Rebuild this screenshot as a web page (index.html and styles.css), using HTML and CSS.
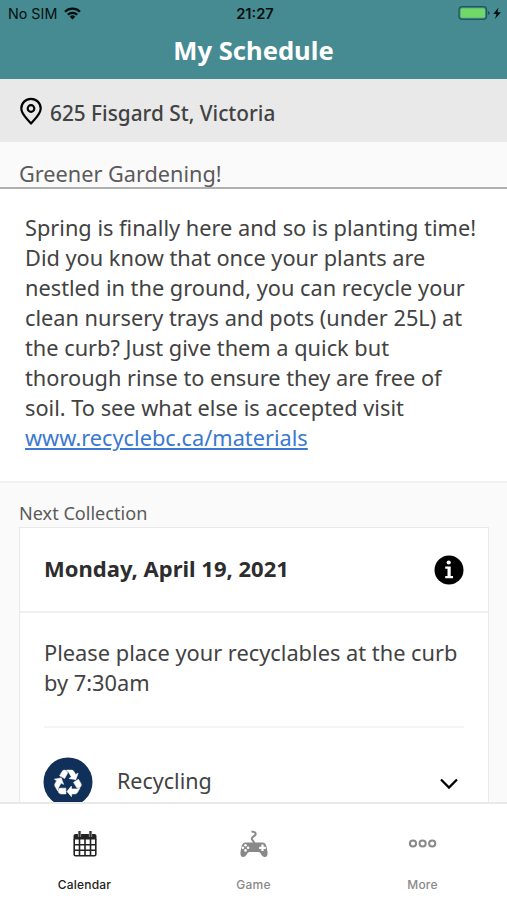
FILE: index.html
```
<!DOCTYPE html>
<html lang="en">
<head>
  <meta charset="UTF-8" />
  <meta name="viewport" content="width=device-width, initial-scale=1" />
  <title>My Schedule</title>
  <link rel="stylesheet" href="styles.css">
</head>
<body>

<header class="header">
  <div class="status-bar">
    <div class="carrier">
      <span>No SIM</span>
      <svg class="wifi" width="17" height="13" viewBox="0 0 17 13">
        <g fill="none" stroke="#050e0f" stroke-width="2.3">
          <path d="M1 4.8a10.5 10.5 0 0 1 15 0" />
          <path d="M3.8 7.8a6.5 6.5 0 0 1 9.4 0" />
        </g>
        <path d="M5.7 9.7a4 4 0 0 1 5.6 0L8.5 12.5z" fill="#050e0f" />
      </svg>
    </div>
    <div class="clock">21:27</div>
    <svg class="battery" width="44" height="16" viewBox="0 0 44 16">
      <rect x="1" y=".7" width="27.5" height="12.6" rx="3" fill="none" stroke="#23565b" stroke-width="1.3" />
      <rect x="2.5" y="2.2" width="24.5" height="9.6" rx="1.5" fill="#6fd869" />
      <path d="M30 5v4q1.8-.5 1.8-2T30 5" fill="#23565b" />
      <path d="M40.5 1.500 35.300 8h3.200l-1.500 5 5.900-6.800h-3.400z" fill="#050e0f" />
    </svg>
  </div>
  <h1 class="title">My Schedule</h1>
</header>

<div class="address">
  <svg class="pin" width="24" height="28" viewBox="0 0 24 28">
    <path d="M12 26.500C8.500 22 2.300 17.500 2.300 11.500a9.700 9.700 0 0 1 19.400 0c0 6-6.200 10.500-9.700 15z" fill="none" stroke="#000" stroke-width="2.200" stroke-linejoin="round" />
    <circle cx="12" cy="11.500" r="3.300" fill="none" stroke="#000" stroke-width="2.200" />
  </svg>
  <span>625 Fisgard St, Victoria</span>
</div>

<main class="content">
  <h2 class="news-title">Greener Gardening!</h2>
  <div class="news">
    Spring is finally here and so is planting time!<br />
    Did you know that once your plants are<br />
    nestled in the ground, you can recycle your<br />
    clean nursery trays and pots (under 25L) at<br />
    the curb? Just give them a quick but<br />
    thorough rinse to ensure they are free of<br />
    soil. To see what else is accepted visit<br />
    <a class="news-link" href="#">www.recyclebc.ca/materials</a>
  </div>

  <h3 class="section-label">Next Collection</h3>
  <div class="card">
    <div class="card-header">
      <span class="date">Monday, April 19, 2021</span>
      <svg class="info" width="30" height="30" viewBox="0 0 30 30">
        <circle cx="15" cy="15" r="14.500" fill="#000" />
        <circle cx="14.700" cy="7.500" r="2.100" fill="#fff" />
        <path d="M11.200 11.500h5.500v9.500h2.300v2.200h-7.800V21h2.300v-7.300h-2.300z" fill="#fff" />
      </svg>
    </div>
    <div class="card-body">
      <p class="note">Please place your recyclables at the curb<br />by 7:30am</p>
      <div class="stream">
        <svg class="recycle" width="50" height="50" viewBox="-25 -25 50 50">
          <circle r="24.500" fill="#10305a" />
          <g fill="#fff" stroke="#fff" stroke-width=".5" stroke-linejoin="round" transform="translate(0 1) scale(1.12)">
            <path id="arm" d="M-7.500-6.500-5.300-10.300Q-4.500-11.500-3-11.500-1.600-11.300-.9-10L-.3-8.900-3-4zM-1.500-11.500H3.200Q4.600-11.500 5.300-10.300L6.800-7.700 9-8.800 7-3 .9-4 3-5.400 .8-9.200z" />
            <use href="#arm" transform="rotate(120)" />
            <use href="#arm" transform="rotate(240)" />
          </g>
        </svg>
        <span class="stream-name">Recycling</span>
        <svg class="chevron" width="20" height="14" viewBox="0 0 20 14">
          <path d="M2 2.500l8 8 8-8" fill="none" stroke="#000" stroke-width="2.300" />
        </svg>
      </div>
    </div>
  </div>
</main>

<nav class="tabs">
  <a class="tab active">
    <svg class="tab-icon" width="30" height="32" viewBox="0 0 30 32">
      <path d="M5.500 6h19q2 0 2 2v3.500h-23V8q0-2 2-2z" fill="#222" />
      <path d="M4.200 11v15.500q0 1.300 1.300 1.300h19q1.300 0 1.300-1.300V11M4 16.800h22M4 22.200h22M9.500 11v17M15 11v17M20.500 11v17" fill="none" stroke="#222" stroke-width="1.600" />
      <path d="M9.500 3v6M20.500 3v6" stroke="#bbb" stroke-width="3.200" />
      <path d="M9.500 3v6M20.500 3v6" stroke="#333" stroke-width="2" />
    </svg>
    <span>Calendar</span>
  </a>
  <a class="tab">
    <svg class="tab-icon" width="30" height="32" viewBox="0 0 30 32">
      <path d="M12.500 3.500q5 .3 4 3.300c-1 2-4 1.700-3.700 4.200.2 1.800 2.500 1.500 2.500 5" fill="none" stroke="#898989" stroke-width="2" />
      <path d="M6.500 14.500h17q3 0 4 4l1 5.500q.5 4.500-2.500 5c-3.500.3-4-5-6.500-5h-9c-2.500 0-3 5.300-6.500 5q-3-.5-2.500-5l1-5.500q1-4 4-4z" fill="#898989" />
      <path d="M23.500 16.500v6.500M20.200 19.800h6.600" stroke="#fff" stroke-width="2.200" />
      <g fill="#fff">
        <circle cx="6.500" cy="17.200" r="1.300" />
        <circle cx="6.500" cy="22.400" r="1.300" />
        <circle cx="3.900" cy="19.800" r="1.300" />
        <circle cx="9.100" cy="19.800" r="1.300" />
      </g>
    </svg>
    <span>Game</span>
  </a>
  <a class="tab">
    <svg class="tab-icon" width="30" height="32" viewBox="0 0 30 32">
      <g fill="none" stroke="#898989" stroke-width="2">
        <circle cx="5" cy="15.500" r="3.100" />
        <circle cx="14.600" cy="15.500" r="3.100" />
        <circle cx="24.200" cy="15.500" r="3.100" />
      </g>
    </svg>
    <span>More</span>
  </a>
</nav>

</body>
</html>
```
FILE: styles.css
```
* {
  box-sizing: border-box;
}

body {
  margin: 0;
  height: 100vh;
  display: flex;
  flex-direction: column;
  overflow: hidden;
  background: #fafafa;
  color: #424242;
  font-family: 'Noto Sans', sans-serif;
}

h1, h2, h3, p {
  margin: 0;
}

.header {
  flex: none;
  height: 79px;
  background: #458b91;
}

.status-bar {
  display: grid;
  grid-template-columns: 1fr auto 1fr;
  align-items: center;
  height: 27px;
  padding: 0 5px 0 8px;
  font-family: Inter, sans-serif;
  font-size: 14.3px;
  color: #050e0f;
}

.carrier {
  display: flex;
  align-items: center;
  gap: 7px;
}

.clock {
  font-size: 14.7px;
  font-weight: 600;
}

.battery {
  justify-self: end;
}

.title {
  font-size: 25.6px;
  line-height: 47px;
  font-weight: 700;
  text-align: center;
  color: #fff;
}

.address {
  flex: none;
  display: flex;
  align-items: center;
  gap: 7px;
  height: 63px;
  padding: 5px 19px 0;
  background: #e9e9e9;
  font-size: 20.8px;
  font-weight: 500;
}

.pin {
  margin-top: -5px;
}

.content {
  flex: 1;
  min-height: 0;
  overflow: hidden;
}

.news-title {
  height: 47px;
  padding: 17px 19px 0;
  border-bottom: 2px solid #b0b0b0;
  font-size: 21.7px;
  line-height: 30px;
  font-weight: 400;
  color: #5b5b5b;
}

.news {
  height: 294px;
  padding: 24px 25px 0;
  background: #fff;
  border-bottom: 2px solid #f1f1f1;
  font-size: 21.75px;
  line-height: 30px;
  white-space: nowrap;
}

.news-link {
  color: #3b78d0;
}

.section-label {
  height: 44px;
  padding: 17px 19px 0;
  font-size: 18.1px;
  line-height: 26px;
  font-weight: 400;
  color: #5b5b5b;
}

.card {
  margin: 0 18px 0 19px;
  height: 320px;
  background: #fff;
  border: 1px solid #e9e9e9;
}

.card-header {
  display: flex;
  align-items: center;
  justify-content: space-between;
  height: 85px;
  padding: 0 24px;
  border-bottom: 2px solid #efefef;
}

.date {
  margin-top: -4px;
  font-size: 22px;
  font-weight: 700;
  color: #2d2d2d;
}

.info {
  margin-top: 1px;
}

.card-body {
  padding: 25px 24px 0;
}

.note {
  height: 90px;
  border-bottom: 2px solid #f5f5f5;
  font-size: 21.8px;
  line-height: 30px;
  white-space: nowrap;
}

.stream {
  display: flex;
  align-items: center;
  height: 50px;
  margin-top: 29px;
}

.recycle {
  margin-left: -1px;
}

.stream-name {
  margin: -4px 0 0 24px;
  font-size: 21.5px;
}

.chevron {
  margin: 3px 5px 0 auto;
}

.tabs {
  flex: none;
  display: grid;
  grid-template-columns: repeat(3, 1fr);
  height: 98px;
  background: #fff;
  border-top: 2px solid #e9e9e9;
}

.tab {
  display: flex;
  flex-direction: column;
  align-items: center;
  padding-top: 24px;
  gap: 17px;
  font-family: Inter, sans-serif;
  font-size: 12px;
  font-weight: 500;
  line-height: 16px;
  letter-spacing: .2px;
  color: #898989;
}

.active {
  color: #222;
}
```
